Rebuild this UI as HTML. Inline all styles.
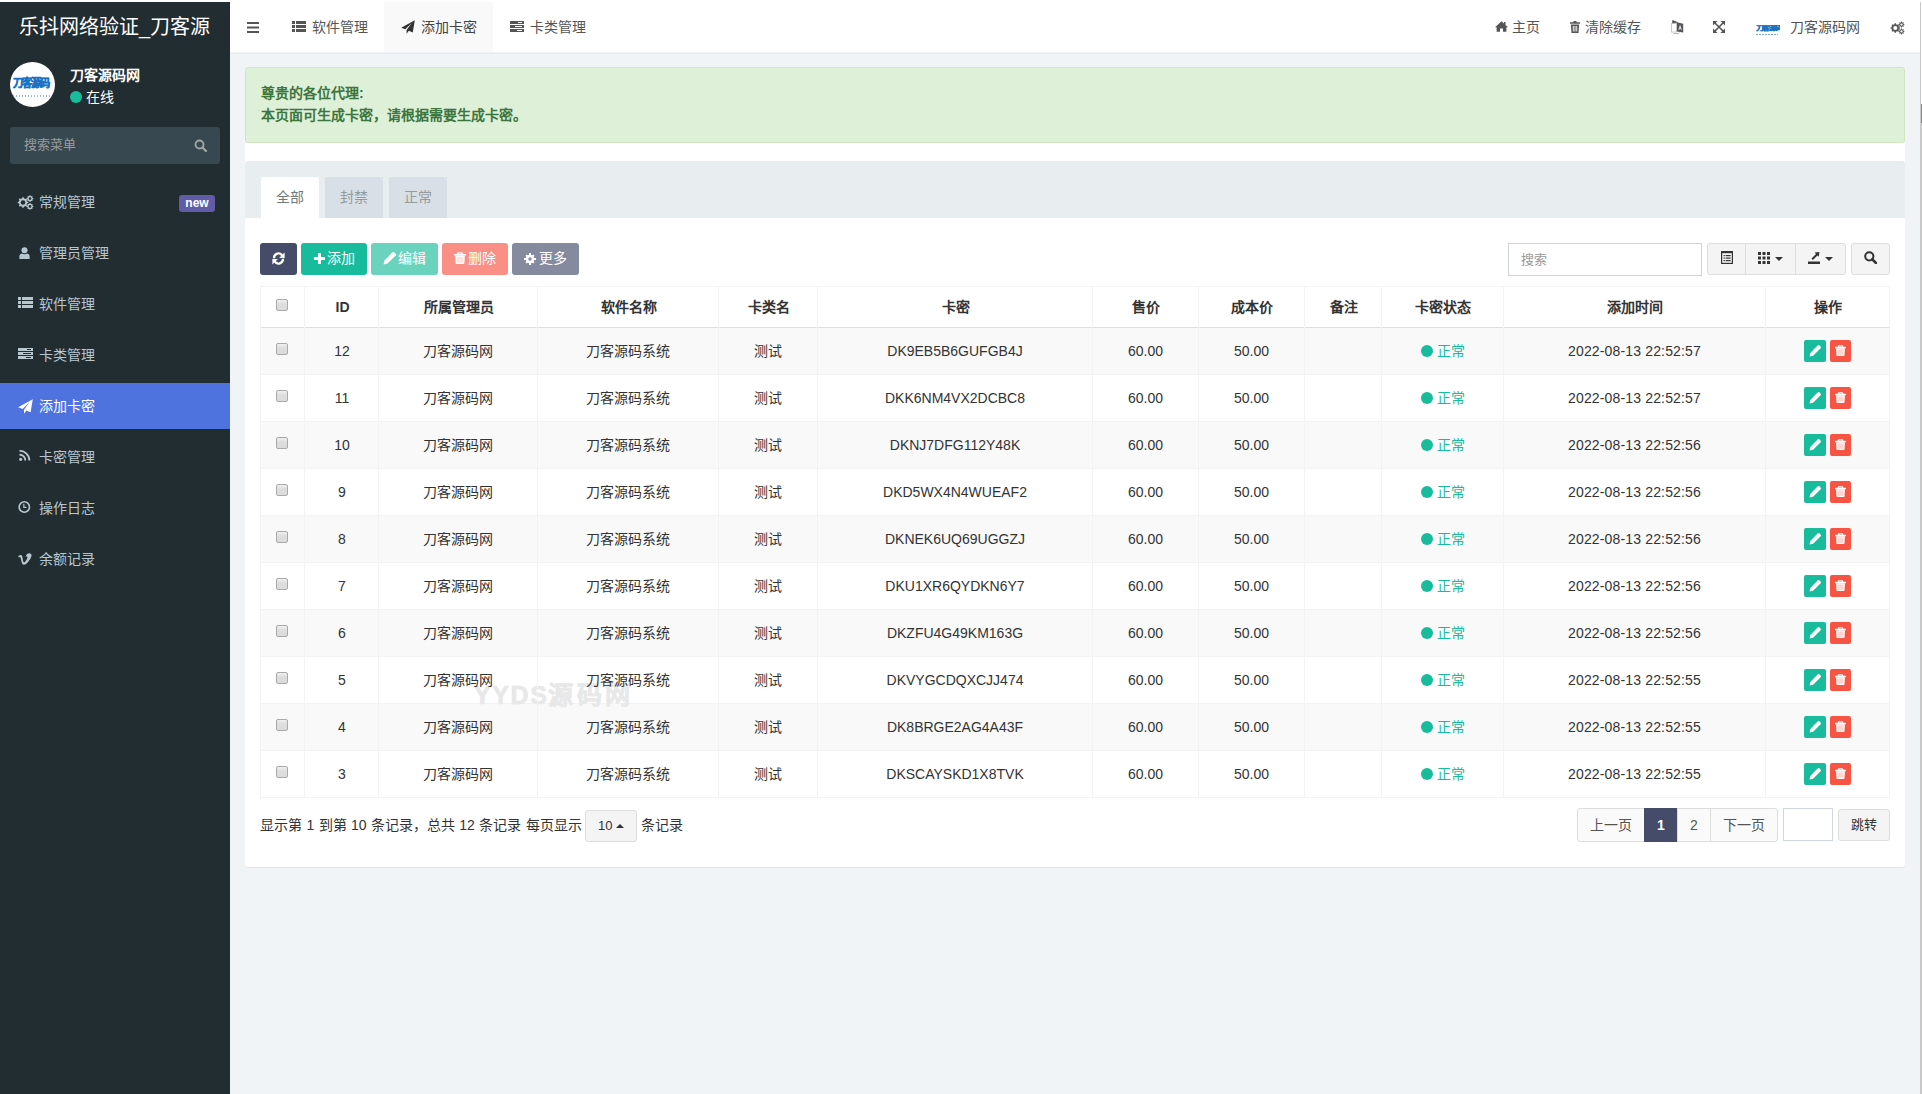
<!DOCTYPE html>
<html lang="zh-CN"><head><meta charset="utf-8">
<style>
*{box-sizing:border-box}
html,body{margin:0;padding:0}
body{width:1922px;height:1094px;position:relative;overflow:hidden;background:#fff;font-family:"Liberation Sans",sans-serif;font-size:14px;color:#333}
.abs{position:absolute}
svg{display:block}
#sb{position:absolute;left:0;top:2px;width:230px;height:1092px;background:#222d32}
#logo{position:absolute;left:0;top:0;width:230px;height:50px;color:#fff;font-size:20px;line-height:50px;padding-left:19px;white-space:nowrap}
.menu{position:absolute;left:0;width:230px;height:46px;color:#b8c7ce;font-size:14px;line-height:46px}
.menu .ic{position:absolute}
.menu .tx{position:absolute;left:39px;top:0}
.menu.active{background:#4e73df;color:#fff}
#hd{position:absolute;left:230px;top:2px;width:1690px;height:51px;background:#fff;border-bottom:1px solid #d9dee2}
.nav{position:absolute;top:0;height:50px;line-height:50px;color:#555;font-size:14px;white-space:nowrap}
#content{position:absolute;left:230px;top:52px;width:1690px;height:1042px;background:#f1f4f6}

.btn{position:absolute;top:243px;height:32px;border-radius:3px;color:#fff;font-size:14px;line-height:30px;white-space:nowrap}
.th{position:absolute;top:286px;height:42px;line-height:42px;text-align:center;font-weight:bold;color:#333;font-size:14px}
.cell{position:absolute;height:47px;line-height:47px;text-align:center;color:#333;font-size:14px;white-space:nowrap}
.dt{letter-spacing:0.15px}
.vl{position:absolute;top:286px;width:1px;height:512px;background:#f3f3f3}
.pg{position:absolute;top:808px;height:34px;line-height:32px;text-align:center;border:1px solid #ddd;background:#fafafa;color:#555;font-size:14px}
</style></head>
<body>
<div id="sb">
  <div id="logo">乐抖网络验证_刀客源</div>
  <div class="abs" style="left:10px;top:60px;width:45px;height:45px;border-radius:50%;background:#fff;overflow:hidden">
    <div class="abs" style="left:3px;top:15px;width:41px;font:bold 11px/12px 'Liberation Sans',sans-serif;color:#1b72c2;-webkit-text-stroke:0.5px #1b72c2;letter-spacing:-1.2px;white-space:nowrap;transform:scaleX(0.93);transform-origin:left top">刀客源码</div>
    <div class="abs" style="left:3px;top:33px;width:39px;height:2px;background:repeating-linear-gradient(90deg,rgba(60,130,205,0.55) 0 1.5px,transparent 1.5px 3px)"></div>
  </div>
  <div class="abs" style="left:70px;top:63px;color:#fff;font-weight:bold;font-size:14px;line-height:20px;white-space:nowrap">刀客源码网</div>
  <div class="abs" style="left:70px;top:89px;width:12px;height:12px;border-radius:50%;background:#18bc9c"></div>
  <div class="abs" style="left:86px;top:85px;color:#fff;font-size:14px;line-height:20px;white-space:nowrap">在线</div>
  <div class="abs" style="left:10px;top:125px;width:210px;height:37px;border-radius:3px;background:#374850"></div>
  <div class="abs" style="left:24px;top:133px;color:#9a9c9c;font-size:13px;line-height:20px;white-space:nowrap">搜索菜单</div>
  <svg class="abs" style="left:194px;top:137px" width="13" height="13" viewBox="0 0 13 13"><circle cx="5.5" cy="5.5" r="4" fill="none" stroke="#a3a6a6" stroke-width="1.8"/><path d="M8.5 8.5L12 12" stroke="#a3a6a6" stroke-width="2.2" stroke-linecap="round"/></svg>
  <div class="menu" style="top:177px"><svg class="ic" style="left:17px;top:16px" width="17" height="15" viewBox="0 0 17 15"><g fill="#b8c7ce"><circle cx="6" cy="7.5" r="4.2"/><circle cx="13" cy="3.6" r="2.6"/><circle cx="13" cy="11.4" r="2.6"/></g><g fill="none" stroke="#b8c7ce" stroke-width="1.6"><path d="M6 2.2v10.6M0.7 7.5h10.6M2.3 3.8l7.4 7.4M9.7 3.8l-7.4 7.4"/><path d="M13 0.3v6.6M9.7 3.6h6.6M10.7 1.3l4.6 4.6M15.3 1.3l-4.6 4.6M13 8.1v6.6M9.7 11.4h6.6M10.7 9.1l4.6 4.6M15.3 9.1l-4.6 4.6" stroke-width="1.1"/></g><g fill="#222d32"><circle cx="6" cy="7.5" r="2.3"/><circle cx="13" cy="3.6" r="1.3"/><circle cx="13" cy="11.4" r="1.3"/></g></svg><span class="tx">常规管理</span><div class="abs" style="left:179px;top:16px;width:36px;height:17px;border-radius:3px;background:#605ca8;color:#fff;font-weight:bold;font-size:12px;line-height:17px;text-align:center">new</div></div>
<div class="menu" style="top:228px"><svg class="ic" style="left:19px;top:17px" width="11" height="12" viewBox="0 0 12 13"><circle cx="6" cy="3.4" r="3.3" fill="#b8c7ce"/><path d="M0.4 13V10.2Q0.4 7.4 3.2 7.1Q4.5 7.9 6 7.9Q7.5 7.9 8.8 7.1Q11.6 7.4 11.6 10.2V13Z" fill="#b8c7ce"/></svg><span class="tx">管理员管理</span></div>
<div class="menu" style="top:279px"><svg class="ic" style="left:18px;top:16px" width="15" height="12" viewBox="0 0 15 12"><g fill="#b8c7ce"><rect x="0" y="0" width="3" height="3"/><rect x="4" y="0" width="11" height="3"/><rect x="0" y="4" width="3" height="3"/><rect x="4" y="4" width="11" height="3"/><rect x="0" y="8" width="3" height="3"/><rect x="4" y="8" width="11" height="3"/></g></svg><span class="tx">软件管理</span></div>
<div class="menu" style="top:330px"><svg class="ic" style="left:18px;top:16px" width="15" height="12" viewBox="0 0 15 12"><g fill="#b8c7ce"><rect x="0" y="0" width="15" height="3"/><rect x="0" y="4" width="15" height="3"/><rect x="0" y="8" width="15" height="3"/></g><g fill="#222d32"><rect x="9" y="1" width="4" height="1"/><rect x="5" y="5" width="8" height="1"/><rect x="8" y="9" width="5" height="1"/></g></svg><span class="tx">卡类管理</span></div>
<div class="menu active" style="top:381px"><svg class="ic" style="left:18px;top:16px" width="15" height="15" viewBox="0 0 15 15"><path d="M14.8 0.2L0.2 8.3L4.6 10L11.5 3.2L6 10.8L6 14.8L8.4 11.6L12.6 13.3Z" fill="#fff"/></svg><span class="tx">添加卡密</span></div>
<div class="menu" style="top:432px"><svg class="ic" style="left:19px;top:16px" width="12" height="11" viewBox="0 0 13 12"><circle cx="1.8" cy="10.2" r="1.7" fill="#b8c7ce"/><path d="M0.5 5.2A6 6 0 0 1 6.8 11.5" fill="none" stroke="#b8c7ce" stroke-width="2"/><path d="M0.5 1A10.5 10.5 0 0 1 11.3 11.5" fill="none" stroke="#b8c7ce" stroke-width="2"/></svg><span class="tx">卡密管理</span></div>
<div class="menu" style="top:483px"><svg class="ic" style="left:18px;top:16px" width="13" height="12" viewBox="0 0 14 13"><circle cx="6.8" cy="6.5" r="5.6" fill="none" stroke="#b8c7ce" stroke-width="1.7"/><path d="M6.3 3v4h2.8" fill="none" stroke="#b8c7ce" stroke-width="1.3"/></svg><span class="tx">操作日志</span></div>
<div class="menu" style="top:534px"><svg class="ic" style="left:18px;top:17px" width="14" height="12" viewBox="0 0 14 12"><path d="M0.3 3.2C1.3 2.4 2.2 1.9 3 2C4.2 2.1 4.4 4 4.8 6.2C5.2 8.3 5.6 9.4 6.1 9.4C7.4 9.3 9.4 5.6 9.4 4.5C9.4 3.3 8.4 3.5 7.6 3.9C8.3 1.2 10.2 0.1 12 0.4C14.2 0.8 13.8 3.5 12.2 6C10.4 8.8 8.1 11.7 6.1 11.8C4.3 11.9 3.8 9.8 3.3 7.7C2.9 5.8 2.6 3.8 1.9 3.9C1.6 3.9 1.1 4.2 0.8 4.5Z" fill="#b8c7ce"/></svg><span class="tx">余额记录</span></div>

</div>
<div id="hd">
  <svg class="abs" style="left:17px;top:20px" width="12" height="11" viewBox="0 0 12 11"><g fill="#555"><rect x="0" y="0" width="12" height="2"/><rect x="0" y="4.5" width="12" height="2"/><rect x="0" y="9" width="12" height="2"/></g></svg>
  <svg class="abs" style="left:62px;top:19px" width="14" height="11" viewBox="0 0 14 11"><g fill="#555"><rect x="0" y="0" width="3" height="3"/><rect x="4" y="0" width="10" height="3"/><rect x="0" y="4" width="3" height="3"/><rect x="4" y="4" width="10" height="3"/><rect x="0" y="8" width="3" height="3"/><rect x="4" y="8" width="10" height="3"/></g></svg>
  <div class="nav" style="left:82px">软件管理</div>
  <div class="abs" style="left:154px;top:0;width:109px;height:50px;background:#f9f9f9"></div>
  <svg class="abs" style="left:171px;top:18px" width="14" height="14" viewBox="0 0 15 15"><path d="M14.8 0.2L0.2 8.3L4.6 10L11.5 3.2L6 10.8L6 14.8L8.4 11.6L12.6 13.3Z" fill="#333"/></svg>
  <div class="nav" style="left:191px;color:#444">添加卡密</div>
  <svg class="abs" style="left:280px;top:19px" width="14" height="11" viewBox="0 0 14 11"><g fill="#555"><rect x="0" y="0" width="14" height="3"/><rect x="0" y="4" width="14" height="3"/><rect x="0" y="8" width="14" height="3"/></g><g fill="#fff"><rect x="8" y="1" width="4" height="1"/><rect x="5" y="5" width="7" height="1"/><rect x="7" y="9" width="5" height="1"/></g></svg>
  <div class="nav" style="left:300px">卡类管理</div>

  <svg class="abs" style="left:1265px;top:19px" width="13" height="11" viewBox="0 0 13 11"><path d="M6.5 0.3L0 6.2L1.6 6.2L1.6 10.8L5 10.8L5 7.5L8 7.5L8 10.8L11.4 10.8L11.4 6.2L13 6.2L10.5 3.9L10.5 1L9 1L9 2.5Z" fill="#555"/></svg>
  <div class="nav" style="left:1282px">主页</div>
  <svg class="abs" style="left:1340px;top:19px" width="10" height="12" viewBox="0 0 10 12"><path d="M3.5 0h3v1.2H10v1.6H0V1.2h3.5Z M0.8 3.5h8.4L8.5 12H1.5Z" fill="#555"/><g fill="#fff"><rect x="2.8" y="5" width="0.9" height="5.5"/><rect x="4.55" y="5" width="0.9" height="5.5"/><rect x="6.3" y="5" width="0.9" height="5.5"/></g></svg>
  <div class="nav" style="left:1355px">清除缓存</div>
  <svg class="abs" style="left:1440px;top:17px" width="14" height="16" viewBox="0 0 14 16"><rect x="1.5" y="4.5" width="5.5" height="8.5" fill="#fff" stroke="#c8c8d0" stroke-width="1"/><path d="M2.2 1.2L3.4 1.2L8.5 3.4L2.2 4.2Z" fill="#555"/><path d="M6.8 3.3L13.2 4.8V13.5L6.8 12.5Z" fill="#555"/><path d="M8.4 11L9.8 6.2H10.4L11.8 11H10.9L10.6 9.8H9.6L9.3 11Z" fill="#dfe6f0"/><path d="M3.5 14.6H8.5L9.6 13.4" fill="none" stroke="#aaa" stroke-width="0.9"/></svg>
  <svg class="abs" style="left:1483px;top:19px" width="12" height="12" viewBox="0 0 12 12"><g fill="#555"><path d="M0 0h4.6L0 4.6Z"/><path d="M12 0h-4.6L12 4.6Z"/><path d="M0 12h4.6L0 7.4Z"/><path d="M12 12h-4.6L12 7.4Z"/></g><path d="M1.5 1.5L10.5 10.5M10.5 1.5L1.5 10.5" stroke="#555" stroke-width="1.6"/></svg>
  <div class="abs" style="left:1514px;top:14px;width:25px;height:25px;border-radius:50%;background:#fff"></div>
  <div class="abs" style="left:1526px;top:23px;width:24px;height:8px;overflow:hidden"><div style="font:bold 8px/8px 'Liberation Sans',sans-serif;color:#1b72c2;-webkit-text-stroke:0.4px #1b72c2;letter-spacing:-1.6px;white-space:nowrap;transform:scaleY(0.75);transform-origin:left top">刀客源码</div></div><div class="abs" style="left:1526px;top:32px;width:22px;height:1px;background:repeating-linear-gradient(90deg,#7faad8 0 2px,transparent 2px 3px)"></div>
  <div class="nav" style="left:1560px">刀客源码网</div>
  <svg class="abs" style="left:1660px;top:19px" width="15" height="14" viewBox="0 0 17 15"><g fill="#555"><circle cx="6" cy="7.5" r="4.2"/><circle cx="13" cy="3.6" r="2.6"/><circle cx="13" cy="11.4" r="2.6"/></g><g fill="none" stroke="#555" stroke-width="1.6"><path d="M6 2.2v10.6M0.7 7.5h10.6M2.3 3.8l7.4 7.4M9.7 3.8l-7.4 7.4"/><path d="M13 0.3v6.6M9.7 3.6h6.6M10.7 1.3l4.6 4.6M15.3 1.3l-4.6 4.6M13 8.1v6.6M9.7 11.4h6.6M10.7 9.1l4.6 4.6M15.3 9.1l-4.6 4.6" stroke-width="1.1"/></g><g fill="#fff"><circle cx="6" cy="7.5" r="2.3"/><circle cx="13" cy="3.6" r="1.3"/><circle cx="13" cy="11.4" r="1.3"/></g></svg>
</div>
<div id="content"></div>
<div class="abs" style="left:230px;top:53px;width:1690px;height:1px;background:#e6eaed"></div>
<!-- alert -->
<div class="abs" style="left:245px;top:67px;width:1660px;height:76px;background:#dff0d8;border:1px solid #d0e6c2;border-radius:3px"></div>
<div class="abs" style="left:261px;top:83px;color:#3c763d;font-weight:bold;font-size:14px;line-height:21.5px;white-space:nowrap">尊贵的各位代理:<br>本页面可生成卡密，请根据需要生成卡密。</div>
<!-- panel -->
<div class="abs" style="left:245px;top:143px;width:1660px;height:724px;background:#fff;border-radius:0 0 3px 3px;box-shadow:0 1px 1px rgba(0,0,0,0.06)"></div>
<div class="abs" style="left:245px;top:161px;width:1660px;height:57px;background:#e8edf0;border-radius:3px 3px 0 0"></div>
<div class="abs" style="left:261px;top:177px;width:58px;height:41px;background:#fff;border-radius:2px 2px 0 0;color:#6e7b7c;text-align:center;line-height:40px">全部</div>
<div class="abs" style="left:325px;top:177px;width:58px;height:41px;background:#d9dfe6;border-radius:2px 2px 0 0;color:#939b9c;text-align:center;line-height:40px">封禁</div>
<div class="abs" style="left:389px;top:177px;width:58px;height:41px;background:#d9dfe6;border-radius:2px 2px 0 0;color:#939b9c;text-align:center;line-height:40px">正常</div>
<!-- toolbar -->
<div class="btn" style="left:260px;width:37px;background:#444c69"><svg class="abs" style="left:12px;top:9px" width="13" height="13" viewBox="0 0 13 13"><g fill="none" stroke="#fff" stroke-width="2.3"><path d="M2 6.2A4.5 4.5 0 0 1 10.3 3.6"/><path d="M11 6.8A4.5 4.5 0 0 1 2.7 9.4"/></g><path d="M12.6 0.4V5.9H7.1Z" fill="#fff"/><path d="M0.4 12.6V7.1H5.9Z" fill="#fff"/></svg></div>
<div class="btn" style="left:301px;width:66px;background:#18bc9c"><svg class="abs" style="left:13px;top:10px" width="11" height="11" viewBox="0 0 11 11"><path d="M4 0h3v4h4v3H7v4H4V7H0V4h4Z" fill="#fff"/></svg><span class="abs" style="left:26px">添加</span></div>
<div class="btn" style="left:371px;width:67px;background:#6ad3be"><svg class="abs" style="left:12px;top:9px" width="13" height="13" viewBox="0 0 12 12"><path d="M0.5 11.5L1.3 7.9L9.1 0.1Q9.6 -0.3 10.1 0.1L11.9 1.9Q12.3 2.4 11.9 2.9L4.1 10.7Z" fill="#fff"/></svg><span class="abs" style="left:27px">编辑</span></div>
<div class="btn" style="left:442px;width:66px;background:#fa9085"><svg class="abs" style="left:12px;top:9px" width="12" height="12" viewBox="0 0 12 12"><path d="M3.6 0.2H8.4L9.2 1.9H11.4Q12 1.9 12 2.5V3.6H0V2.5Q0 1.9 0.6 1.9H2.8Z" fill="#fff"/><path d="M1.2 3.6H10.8L10.4 11.2Q10.3 12 9.5 12H2.5Q1.7 12 1.6 11.2Z" fill="#fff"/><rect x="2.9" y="4.9" width="6.2" height="5.8" fill="#fa9085" opacity="0.25"/><rect x="4.3" y="0.9" width="3.4" height="1" fill="#fa9085" opacity="0.5"/></svg><span class="abs" style="left:26px">删除</span></div>
<div class="btn" style="left:512px;width:67px;background:#858a9f"><svg class="abs" style="left:12px;top:10px" width="12" height="12" viewBox="0 0 12 12"><g fill="#fff"><circle cx="6" cy="6" r="4.2"/><path d="M5 0h2v12H5Z M0 5h12v2H0Z M1.4 2.8l1.4-1.4l7.8 7.8l-1.4 1.4Z M9.2 1.4l1.4 1.4l-7.8 7.8l-1.4-1.4Z"/></g><circle cx="6" cy="6" r="1.7" fill="#858a9f"/></svg><span class="abs" style="left:27px">更多</span></div>
<!-- search & tools -->
<div class="abs" style="left:1508px;top:243px;width:194px;height:33px;border:1px solid #ccd2da;background:#fff;border-radius:0"></div>
<div class="abs" style="left:1521px;top:250px;color:#999;font-size:13px;line-height:20px">搜索</div>
<div class="abs" style="left:1707px;top:243px;width:139px;height:32px;border:1px solid #ddd;background:#f4f4f4;border-radius:3px"></div>
<div class="abs" style="left:1745px;top:243px;width:1px;height:32px;background:#ddd"></div>
<div class="abs" style="left:1795px;top:243px;width:1px;height:32px;background:#ddd"></div>
<svg class="abs" style="left:1721px;top:251px" width="12" height="13" viewBox="0 0 12 13"><rect x="0.6" y="0.6" width="10.8" height="11.8" fill="none" stroke="#333" stroke-width="1.2"/><rect x="0" y="0" width="12" height="2.2" fill="#333"/><g fill="#333"><rect x="2.5" y="4" width="1.3" height="1.2"/><rect x="4.6" y="4" width="5" height="1.2"/><rect x="2.5" y="6.5" width="1.3" height="1.2"/><rect x="4.6" y="6.5" width="5" height="1.2"/><rect x="2.5" y="9" width="1.3" height="1.2"/><rect x="4.6" y="9" width="5" height="1.2"/></g></svg>
<svg class="abs" style="left:1758px;top:252px" width="12" height="12" viewBox="0 0 12 12"><g fill="#333"><rect x="0" y="0" width="3" height="3"/><rect x="4.5" y="0" width="3" height="3"/><rect x="9" y="0" width="3" height="3"/><rect x="0" y="4.5" width="3" height="3"/><rect x="4.5" y="4.5" width="3" height="3"/><rect x="9" y="4.5" width="3" height="3"/><rect x="0" y="9" width="3" height="3"/><rect x="4.5" y="9" width="3" height="3"/><rect x="9" y="9" width="3" height="3"/></g></svg>
<svg class="abs" style="left:1775px;top:257px" width="8" height="4" viewBox="0 0 8 4"><path d="M0 0h8L4 4Z" fill="#333"/></svg>
<svg class="abs" style="left:1808px;top:251px" width="13" height="13" viewBox="0 0 13 13"><rect x="0" y="10.5" width="12" height="2.5" fill="#333"/><path d="M3.5 7.5L8 3L6.6 1.6L11.4 1L10.8 5.8L9.4 4.4L4.9 8.9Z" fill="#333"/></svg>
<svg class="abs" style="left:1825px;top:257px" width="8" height="4" viewBox="0 0 8 4"><path d="M0 0h8L4 4Z" fill="#333"/></svg>
<div class="abs" style="left:1851px;top:243px;width:39px;height:32px;border:1px solid #ddd;background:#f4f4f4;border-radius:3px"></div>
<svg class="abs" style="left:1864px;top:251px" width="13" height="13" viewBox="0 0 13 13"><circle cx="5.3" cy="5.3" r="4.1" fill="none" stroke="#333" stroke-width="2"/><path d="M8.3 8.3L12 12" stroke="#333" stroke-width="2.6" stroke-linecap="round"/></svg>
<div class="abs" style="left:260px;top:286px;width:1630px;height:512px;border:1px solid #f3f3f3"></div>
<div class="abs" style="left:261px;top:328px;width:1628px;height:47px;background:#f9f9f9"></div>
<div class="abs" style="left:261px;top:374px;width:1628px;height:1px;background:#f3f3f3"></div>
<div class="abs" style="left:261px;top:421px;width:1628px;height:1px;background:#f3f3f3"></div>
<div class="abs" style="left:261px;top:422px;width:1628px;height:47px;background:#f9f9f9"></div>
<div class="abs" style="left:261px;top:468px;width:1628px;height:1px;background:#f3f3f3"></div>
<div class="abs" style="left:261px;top:515px;width:1628px;height:1px;background:#f3f3f3"></div>
<div class="abs" style="left:261px;top:516px;width:1628px;height:47px;background:#f9f9f9"></div>
<div class="abs" style="left:261px;top:562px;width:1628px;height:1px;background:#f3f3f3"></div>
<div class="abs" style="left:261px;top:609px;width:1628px;height:1px;background:#f3f3f3"></div>
<div class="abs" style="left:261px;top:610px;width:1628px;height:47px;background:#f9f9f9"></div>
<div class="abs" style="left:261px;top:656px;width:1628px;height:1px;background:#f3f3f3"></div>
<div class="abs" style="left:261px;top:703px;width:1628px;height:1px;background:#f3f3f3"></div>
<div class="abs" style="left:261px;top:704px;width:1628px;height:47px;background:#f9f9f9"></div>
<div class="abs" style="left:261px;top:750px;width:1628px;height:1px;background:#f3f3f3"></div>
<div class="abs" style="left:261px;top:327px;width:1628px;height:1px;background:#dddddd"></div>
<div class="abs" style="left:474px;top:680px;color:#e8e8e8;-webkit-text-stroke:0.6px #e8e8e8;font-weight:bold;font-size:25px;line-height:30px;letter-spacing:1.6px;white-space:nowrap">YYDS<span style="letter-spacing:3.5px">源码网</span></div>
<div class="vl" style="left:304px"></div>
<div class="vl" style="left:378px"></div>
<div class="vl" style="left:537px"></div>
<div class="vl" style="left:718px"></div>
<div class="vl" style="left:817px"></div>
<div class="vl" style="left:1092px"></div>
<div class="vl" style="left:1198px"></div>
<div class="vl" style="left:1304px"></div>
<div class="vl" style="left:1381px"></div>
<div class="vl" style="left:1503px"></div>
<div class="vl" style="left:1765px"></div>
<div class="abs" style="left:276px;top:299px;width:12px;height:12px;border:1px solid #a9a9a9;border-radius:2px;background:linear-gradient(#f0f0f0,#dddddd 40%,#dcdcdc)"></div>
<div class="th" style="left:306px;width:73px">ID</div>
<div class="th" style="left:379px;width:159px">所属管理员</div>
<div class="th" style="left:538px;width:181px">软件名称</div>
<div class="th" style="left:719px;width:99px">卡类名</div>
<div class="th" style="left:818px;width:275px">卡密</div>
<div class="th" style="left:1093px;width:106px">售价</div>
<div class="th" style="left:1199px;width:106px">成本价</div>
<div class="th" style="left:1305px;width:77px">备注</div>
<div class="th" style="left:1382px;width:122px">卡密状态</div>
<div class="th" style="left:1504px;width:262px">添加时间</div>
<div class="th" style="left:1766px;width:124px">操作</div>
<div class="abs" style="left:276px;top:343px;width:12px;height:12px;border:1px solid #a9a9a9;border-radius:2px;background:linear-gradient(#f0f0f0,#dddddd 40%,#dcdcdc)"></div>
<div class="cell" style="left:306px;top:328px;width:72px">12</div>
<div class="cell" style="left:379px;top:328px;width:158px">刀客源码网</div>
<div class="cell" style="left:538px;top:328px;width:180px">刀客源码系统</div>
<div class="cell" style="left:719px;top:328px;width:98px">测试</div>
<div class="cell" style="left:818px;top:328px;width:274px">DK9EB5B6GUFGB4J</div>
<div class="cell" style="left:1093px;top:328px;width:105px">60.00</div>
<div class="cell" style="left:1199px;top:328px;width:105px">50.00</div>
<div class="abs" style="left:1421px;top:345px;width:12px;height:12px;border-radius:50%;background:#18bc9c"></div>
<div class="abs" style="left:1437px;top:328px;height:47px;line-height:47px;color:#18bc9c;white-space:nowrap">正常</div>
<div class="cell dt" style="left:1504px;top:328px;width:261px">2022-08-13 22:52:57</div>
<div class="abs" style="left:1804px;top:340px;width:22px;height:22px;border-radius:2px;background:#18bc9c"><svg class="abs" style="left:5px;top:5px" width="12" height="12" viewBox="0 0 12 12"><path d="M0.5 11.5L1.3 7.9L9.1 0.1Q9.6 -0.3 10.1 0.1L11.9 1.9Q12.3 2.4 11.9 2.9L4.1 10.7Z" fill="#fff"/></svg></div>
<div class="abs" style="left:1830px;top:340px;width:21px;height:22px;border-radius:2px;background:#f75444"><svg class="abs" style="left:5px;top:5px" width="11" height="11" viewBox="0 0 12 12"><path d="M3.6 0.2H8.4L9.2 1.9H11.4Q12 1.9 12 2.5V3.6H0V2.5Q0 1.9 0.6 1.9H2.8Z" fill="#fff"/><path d="M1.2 3.6H10.8L10.4 11.2Q10.3 12 9.5 12H2.5Q1.7 12 1.6 11.2Z" fill="#fff"/><rect x="2.9" y="4.9" width="6.2" height="5.8" fill="#f75444" opacity="0.25"/><rect x="4.3" y="0.9" width="3.4" height="1" fill="#f75444" opacity="0.5"/></svg></div>
<div class="abs" style="left:276px;top:390px;width:12px;height:12px;border:1px solid #a9a9a9;border-radius:2px;background:linear-gradient(#f0f0f0,#dddddd 40%,#dcdcdc)"></div>
<div class="cell" style="left:306px;top:375px;width:72px">11</div>
<div class="cell" style="left:379px;top:375px;width:158px">刀客源码网</div>
<div class="cell" style="left:538px;top:375px;width:180px">刀客源码系统</div>
<div class="cell" style="left:719px;top:375px;width:98px">测试</div>
<div class="cell" style="left:818px;top:375px;width:274px">DKK6NM4VX2DCBC8</div>
<div class="cell" style="left:1093px;top:375px;width:105px">60.00</div>
<div class="cell" style="left:1199px;top:375px;width:105px">50.00</div>
<div class="abs" style="left:1421px;top:392px;width:12px;height:12px;border-radius:50%;background:#18bc9c"></div>
<div class="abs" style="left:1437px;top:375px;height:47px;line-height:47px;color:#18bc9c;white-space:nowrap">正常</div>
<div class="cell dt" style="left:1504px;top:375px;width:261px">2022-08-13 22:52:57</div>
<div class="abs" style="left:1804px;top:387px;width:22px;height:22px;border-radius:2px;background:#18bc9c"><svg class="abs" style="left:5px;top:5px" width="12" height="12" viewBox="0 0 12 12"><path d="M0.5 11.5L1.3 7.9L9.1 0.1Q9.6 -0.3 10.1 0.1L11.9 1.9Q12.3 2.4 11.9 2.9L4.1 10.7Z" fill="#fff"/></svg></div>
<div class="abs" style="left:1830px;top:387px;width:21px;height:22px;border-radius:2px;background:#f75444"><svg class="abs" style="left:5px;top:5px" width="11" height="11" viewBox="0 0 12 12"><path d="M3.6 0.2H8.4L9.2 1.9H11.4Q12 1.9 12 2.5V3.6H0V2.5Q0 1.9 0.6 1.9H2.8Z" fill="#fff"/><path d="M1.2 3.6H10.8L10.4 11.2Q10.3 12 9.5 12H2.5Q1.7 12 1.6 11.2Z" fill="#fff"/><rect x="2.9" y="4.9" width="6.2" height="5.8" fill="#f75444" opacity="0.25"/><rect x="4.3" y="0.9" width="3.4" height="1" fill="#f75444" opacity="0.5"/></svg></div>
<div class="abs" style="left:276px;top:437px;width:12px;height:12px;border:1px solid #a9a9a9;border-radius:2px;background:linear-gradient(#f0f0f0,#dddddd 40%,#dcdcdc)"></div>
<div class="cell" style="left:306px;top:422px;width:72px">10</div>
<div class="cell" style="left:379px;top:422px;width:158px">刀客源码网</div>
<div class="cell" style="left:538px;top:422px;width:180px">刀客源码系统</div>
<div class="cell" style="left:719px;top:422px;width:98px">测试</div>
<div class="cell" style="left:818px;top:422px;width:274px">DKNJ7DFG112Y48K</div>
<div class="cell" style="left:1093px;top:422px;width:105px">60.00</div>
<div class="cell" style="left:1199px;top:422px;width:105px">50.00</div>
<div class="abs" style="left:1421px;top:439px;width:12px;height:12px;border-radius:50%;background:#18bc9c"></div>
<div class="abs" style="left:1437px;top:422px;height:47px;line-height:47px;color:#18bc9c;white-space:nowrap">正常</div>
<div class="cell dt" style="left:1504px;top:422px;width:261px">2022-08-13 22:52:56</div>
<div class="abs" style="left:1804px;top:434px;width:22px;height:22px;border-radius:2px;background:#18bc9c"><svg class="abs" style="left:5px;top:5px" width="12" height="12" viewBox="0 0 12 12"><path d="M0.5 11.5L1.3 7.9L9.1 0.1Q9.6 -0.3 10.1 0.1L11.9 1.9Q12.3 2.4 11.9 2.9L4.1 10.7Z" fill="#fff"/></svg></div>
<div class="abs" style="left:1830px;top:434px;width:21px;height:22px;border-radius:2px;background:#f75444"><svg class="abs" style="left:5px;top:5px" width="11" height="11" viewBox="0 0 12 12"><path d="M3.6 0.2H8.4L9.2 1.9H11.4Q12 1.9 12 2.5V3.6H0V2.5Q0 1.9 0.6 1.9H2.8Z" fill="#fff"/><path d="M1.2 3.6H10.8L10.4 11.2Q10.3 12 9.5 12H2.5Q1.7 12 1.6 11.2Z" fill="#fff"/><rect x="2.9" y="4.9" width="6.2" height="5.8" fill="#f75444" opacity="0.25"/><rect x="4.3" y="0.9" width="3.4" height="1" fill="#f75444" opacity="0.5"/></svg></div>
<div class="abs" style="left:276px;top:484px;width:12px;height:12px;border:1px solid #a9a9a9;border-radius:2px;background:linear-gradient(#f0f0f0,#dddddd 40%,#dcdcdc)"></div>
<div class="cell" style="left:306px;top:469px;width:72px">9</div>
<div class="cell" style="left:379px;top:469px;width:158px">刀客源码网</div>
<div class="cell" style="left:538px;top:469px;width:180px">刀客源码系统</div>
<div class="cell" style="left:719px;top:469px;width:98px">测试</div>
<div class="cell" style="left:818px;top:469px;width:274px">DKD5WX4N4WUEAF2</div>
<div class="cell" style="left:1093px;top:469px;width:105px">60.00</div>
<div class="cell" style="left:1199px;top:469px;width:105px">50.00</div>
<div class="abs" style="left:1421px;top:486px;width:12px;height:12px;border-radius:50%;background:#18bc9c"></div>
<div class="abs" style="left:1437px;top:469px;height:47px;line-height:47px;color:#18bc9c;white-space:nowrap">正常</div>
<div class="cell dt" style="left:1504px;top:469px;width:261px">2022-08-13 22:52:56</div>
<div class="abs" style="left:1804px;top:481px;width:22px;height:22px;border-radius:2px;background:#18bc9c"><svg class="abs" style="left:5px;top:5px" width="12" height="12" viewBox="0 0 12 12"><path d="M0.5 11.5L1.3 7.9L9.1 0.1Q9.6 -0.3 10.1 0.1L11.9 1.9Q12.3 2.4 11.9 2.9L4.1 10.7Z" fill="#fff"/></svg></div>
<div class="abs" style="left:1830px;top:481px;width:21px;height:22px;border-radius:2px;background:#f75444"><svg class="abs" style="left:5px;top:5px" width="11" height="11" viewBox="0 0 12 12"><path d="M3.6 0.2H8.4L9.2 1.9H11.4Q12 1.9 12 2.5V3.6H0V2.5Q0 1.9 0.6 1.9H2.8Z" fill="#fff"/><path d="M1.2 3.6H10.8L10.4 11.2Q10.3 12 9.5 12H2.5Q1.7 12 1.6 11.2Z" fill="#fff"/><rect x="2.9" y="4.9" width="6.2" height="5.8" fill="#f75444" opacity="0.25"/><rect x="4.3" y="0.9" width="3.4" height="1" fill="#f75444" opacity="0.5"/></svg></div>
<div class="abs" style="left:276px;top:531px;width:12px;height:12px;border:1px solid #a9a9a9;border-radius:2px;background:linear-gradient(#f0f0f0,#dddddd 40%,#dcdcdc)"></div>
<div class="cell" style="left:306px;top:516px;width:72px">8</div>
<div class="cell" style="left:379px;top:516px;width:158px">刀客源码网</div>
<div class="cell" style="left:538px;top:516px;width:180px">刀客源码系统</div>
<div class="cell" style="left:719px;top:516px;width:98px">测试</div>
<div class="cell" style="left:818px;top:516px;width:274px">DKNEK6UQ69UGGZJ</div>
<div class="cell" style="left:1093px;top:516px;width:105px">60.00</div>
<div class="cell" style="left:1199px;top:516px;width:105px">50.00</div>
<div class="abs" style="left:1421px;top:533px;width:12px;height:12px;border-radius:50%;background:#18bc9c"></div>
<div class="abs" style="left:1437px;top:516px;height:47px;line-height:47px;color:#18bc9c;white-space:nowrap">正常</div>
<div class="cell dt" style="left:1504px;top:516px;width:261px">2022-08-13 22:52:56</div>
<div class="abs" style="left:1804px;top:528px;width:22px;height:22px;border-radius:2px;background:#18bc9c"><svg class="abs" style="left:5px;top:5px" width="12" height="12" viewBox="0 0 12 12"><path d="M0.5 11.5L1.3 7.9L9.1 0.1Q9.6 -0.3 10.1 0.1L11.9 1.9Q12.3 2.4 11.9 2.9L4.1 10.7Z" fill="#fff"/></svg></div>
<div class="abs" style="left:1830px;top:528px;width:21px;height:22px;border-radius:2px;background:#f75444"><svg class="abs" style="left:5px;top:5px" width="11" height="11" viewBox="0 0 12 12"><path d="M3.6 0.2H8.4L9.2 1.9H11.4Q12 1.9 12 2.5V3.6H0V2.5Q0 1.9 0.6 1.9H2.8Z" fill="#fff"/><path d="M1.2 3.6H10.8L10.4 11.2Q10.3 12 9.5 12H2.5Q1.7 12 1.6 11.2Z" fill="#fff"/><rect x="2.9" y="4.9" width="6.2" height="5.8" fill="#f75444" opacity="0.25"/><rect x="4.3" y="0.9" width="3.4" height="1" fill="#f75444" opacity="0.5"/></svg></div>
<div class="abs" style="left:276px;top:578px;width:12px;height:12px;border:1px solid #a9a9a9;border-radius:2px;background:linear-gradient(#f0f0f0,#dddddd 40%,#dcdcdc)"></div>
<div class="cell" style="left:306px;top:563px;width:72px">7</div>
<div class="cell" style="left:379px;top:563px;width:158px">刀客源码网</div>
<div class="cell" style="left:538px;top:563px;width:180px">刀客源码系统</div>
<div class="cell" style="left:719px;top:563px;width:98px">测试</div>
<div class="cell" style="left:818px;top:563px;width:274px">DKU1XR6QYDKN6Y7</div>
<div class="cell" style="left:1093px;top:563px;width:105px">60.00</div>
<div class="cell" style="left:1199px;top:563px;width:105px">50.00</div>
<div class="abs" style="left:1421px;top:580px;width:12px;height:12px;border-radius:50%;background:#18bc9c"></div>
<div class="abs" style="left:1437px;top:563px;height:47px;line-height:47px;color:#18bc9c;white-space:nowrap">正常</div>
<div class="cell dt" style="left:1504px;top:563px;width:261px">2022-08-13 22:52:56</div>
<div class="abs" style="left:1804px;top:575px;width:22px;height:22px;border-radius:2px;background:#18bc9c"><svg class="abs" style="left:5px;top:5px" width="12" height="12" viewBox="0 0 12 12"><path d="M0.5 11.5L1.3 7.9L9.1 0.1Q9.6 -0.3 10.1 0.1L11.9 1.9Q12.3 2.4 11.9 2.9L4.1 10.7Z" fill="#fff"/></svg></div>
<div class="abs" style="left:1830px;top:575px;width:21px;height:22px;border-radius:2px;background:#f75444"><svg class="abs" style="left:5px;top:5px" width="11" height="11" viewBox="0 0 12 12"><path d="M3.6 0.2H8.4L9.2 1.9H11.4Q12 1.9 12 2.5V3.6H0V2.5Q0 1.9 0.6 1.9H2.8Z" fill="#fff"/><path d="M1.2 3.6H10.8L10.4 11.2Q10.3 12 9.5 12H2.5Q1.7 12 1.6 11.2Z" fill="#fff"/><rect x="2.9" y="4.9" width="6.2" height="5.8" fill="#f75444" opacity="0.25"/><rect x="4.3" y="0.9" width="3.4" height="1" fill="#f75444" opacity="0.5"/></svg></div>
<div class="abs" style="left:276px;top:625px;width:12px;height:12px;border:1px solid #a9a9a9;border-radius:2px;background:linear-gradient(#f0f0f0,#dddddd 40%,#dcdcdc)"></div>
<div class="cell" style="left:306px;top:610px;width:72px">6</div>
<div class="cell" style="left:379px;top:610px;width:158px">刀客源码网</div>
<div class="cell" style="left:538px;top:610px;width:180px">刀客源码系统</div>
<div class="cell" style="left:719px;top:610px;width:98px">测试</div>
<div class="cell" style="left:818px;top:610px;width:274px">DKZFU4G49KM163G</div>
<div class="cell" style="left:1093px;top:610px;width:105px">60.00</div>
<div class="cell" style="left:1199px;top:610px;width:105px">50.00</div>
<div class="abs" style="left:1421px;top:627px;width:12px;height:12px;border-radius:50%;background:#18bc9c"></div>
<div class="abs" style="left:1437px;top:610px;height:47px;line-height:47px;color:#18bc9c;white-space:nowrap">正常</div>
<div class="cell dt" style="left:1504px;top:610px;width:261px">2022-08-13 22:52:56</div>
<div class="abs" style="left:1804px;top:622px;width:22px;height:22px;border-radius:2px;background:#18bc9c"><svg class="abs" style="left:5px;top:5px" width="12" height="12" viewBox="0 0 12 12"><path d="M0.5 11.5L1.3 7.9L9.1 0.1Q9.6 -0.3 10.1 0.1L11.9 1.9Q12.3 2.4 11.9 2.9L4.1 10.7Z" fill="#fff"/></svg></div>
<div class="abs" style="left:1830px;top:622px;width:21px;height:22px;border-radius:2px;background:#f75444"><svg class="abs" style="left:5px;top:5px" width="11" height="11" viewBox="0 0 12 12"><path d="M3.6 0.2H8.4L9.2 1.9H11.4Q12 1.9 12 2.5V3.6H0V2.5Q0 1.9 0.6 1.9H2.8Z" fill="#fff"/><path d="M1.2 3.6H10.8L10.4 11.2Q10.3 12 9.5 12H2.5Q1.7 12 1.6 11.2Z" fill="#fff"/><rect x="2.9" y="4.9" width="6.2" height="5.8" fill="#f75444" opacity="0.25"/><rect x="4.3" y="0.9" width="3.4" height="1" fill="#f75444" opacity="0.5"/></svg></div>
<div class="abs" style="left:276px;top:672px;width:12px;height:12px;border:1px solid #a9a9a9;border-radius:2px;background:linear-gradient(#f0f0f0,#dddddd 40%,#dcdcdc)"></div>
<div class="cell" style="left:306px;top:657px;width:72px">5</div>
<div class="cell" style="left:379px;top:657px;width:158px">刀客源码网</div>
<div class="cell" style="left:538px;top:657px;width:180px">刀客源码系统</div>
<div class="cell" style="left:719px;top:657px;width:98px">测试</div>
<div class="cell" style="left:818px;top:657px;width:274px">DKVYGCDQXCJJ474</div>
<div class="cell" style="left:1093px;top:657px;width:105px">60.00</div>
<div class="cell" style="left:1199px;top:657px;width:105px">50.00</div>
<div class="abs" style="left:1421px;top:674px;width:12px;height:12px;border-radius:50%;background:#18bc9c"></div>
<div class="abs" style="left:1437px;top:657px;height:47px;line-height:47px;color:#18bc9c;white-space:nowrap">正常</div>
<div class="cell dt" style="left:1504px;top:657px;width:261px">2022-08-13 22:52:55</div>
<div class="abs" style="left:1804px;top:669px;width:22px;height:22px;border-radius:2px;background:#18bc9c"><svg class="abs" style="left:5px;top:5px" width="12" height="12" viewBox="0 0 12 12"><path d="M0.5 11.5L1.3 7.9L9.1 0.1Q9.6 -0.3 10.1 0.1L11.9 1.9Q12.3 2.4 11.9 2.9L4.1 10.7Z" fill="#fff"/></svg></div>
<div class="abs" style="left:1830px;top:669px;width:21px;height:22px;border-radius:2px;background:#f75444"><svg class="abs" style="left:5px;top:5px" width="11" height="11" viewBox="0 0 12 12"><path d="M3.6 0.2H8.4L9.2 1.9H11.4Q12 1.9 12 2.5V3.6H0V2.5Q0 1.9 0.6 1.9H2.8Z" fill="#fff"/><path d="M1.2 3.6H10.8L10.4 11.2Q10.3 12 9.5 12H2.5Q1.7 12 1.6 11.2Z" fill="#fff"/><rect x="2.9" y="4.9" width="6.2" height="5.8" fill="#f75444" opacity="0.25"/><rect x="4.3" y="0.9" width="3.4" height="1" fill="#f75444" opacity="0.5"/></svg></div>
<div class="abs" style="left:276px;top:719px;width:12px;height:12px;border:1px solid #a9a9a9;border-radius:2px;background:linear-gradient(#f0f0f0,#dddddd 40%,#dcdcdc)"></div>
<div class="cell" style="left:306px;top:704px;width:72px">4</div>
<div class="cell" style="left:379px;top:704px;width:158px">刀客源码网</div>
<div class="cell" style="left:538px;top:704px;width:180px">刀客源码系统</div>
<div class="cell" style="left:719px;top:704px;width:98px">测试</div>
<div class="cell" style="left:818px;top:704px;width:274px">DK8BRGE2AG4A43F</div>
<div class="cell" style="left:1093px;top:704px;width:105px">60.00</div>
<div class="cell" style="left:1199px;top:704px;width:105px">50.00</div>
<div class="abs" style="left:1421px;top:721px;width:12px;height:12px;border-radius:50%;background:#18bc9c"></div>
<div class="abs" style="left:1437px;top:704px;height:47px;line-height:47px;color:#18bc9c;white-space:nowrap">正常</div>
<div class="cell dt" style="left:1504px;top:704px;width:261px">2022-08-13 22:52:55</div>
<div class="abs" style="left:1804px;top:716px;width:22px;height:22px;border-radius:2px;background:#18bc9c"><svg class="abs" style="left:5px;top:5px" width="12" height="12" viewBox="0 0 12 12"><path d="M0.5 11.5L1.3 7.9L9.1 0.1Q9.6 -0.3 10.1 0.1L11.9 1.9Q12.3 2.4 11.9 2.9L4.1 10.7Z" fill="#fff"/></svg></div>
<div class="abs" style="left:1830px;top:716px;width:21px;height:22px;border-radius:2px;background:#f75444"><svg class="abs" style="left:5px;top:5px" width="11" height="11" viewBox="0 0 12 12"><path d="M3.6 0.2H8.4L9.2 1.9H11.4Q12 1.9 12 2.5V3.6H0V2.5Q0 1.9 0.6 1.9H2.8Z" fill="#fff"/><path d="M1.2 3.6H10.8L10.4 11.2Q10.3 12 9.5 12H2.5Q1.7 12 1.6 11.2Z" fill="#fff"/><rect x="2.9" y="4.9" width="6.2" height="5.8" fill="#f75444" opacity="0.25"/><rect x="4.3" y="0.9" width="3.4" height="1" fill="#f75444" opacity="0.5"/></svg></div>
<div class="abs" style="left:276px;top:766px;width:12px;height:12px;border:1px solid #a9a9a9;border-radius:2px;background:linear-gradient(#f0f0f0,#dddddd 40%,#dcdcdc)"></div>
<div class="cell" style="left:306px;top:751px;width:72px">3</div>
<div class="cell" style="left:379px;top:751px;width:158px">刀客源码网</div>
<div class="cell" style="left:538px;top:751px;width:180px">刀客源码系统</div>
<div class="cell" style="left:719px;top:751px;width:98px">测试</div>
<div class="cell" style="left:818px;top:751px;width:274px">DKSCAYSKD1X8TVK</div>
<div class="cell" style="left:1093px;top:751px;width:105px">60.00</div>
<div class="cell" style="left:1199px;top:751px;width:105px">50.00</div>
<div class="abs" style="left:1421px;top:768px;width:12px;height:12px;border-radius:50%;background:#18bc9c"></div>
<div class="abs" style="left:1437px;top:751px;height:47px;line-height:47px;color:#18bc9c;white-space:nowrap">正常</div>
<div class="cell dt" style="left:1504px;top:751px;width:261px">2022-08-13 22:52:55</div>
<div class="abs" style="left:1804px;top:763px;width:22px;height:22px;border-radius:2px;background:#18bc9c"><svg class="abs" style="left:5px;top:5px" width="12" height="12" viewBox="0 0 12 12"><path d="M0.5 11.5L1.3 7.9L9.1 0.1Q9.6 -0.3 10.1 0.1L11.9 1.9Q12.3 2.4 11.9 2.9L4.1 10.7Z" fill="#fff"/></svg></div>
<div class="abs" style="left:1830px;top:763px;width:21px;height:22px;border-radius:2px;background:#f75444"><svg class="abs" style="left:5px;top:5px" width="11" height="11" viewBox="0 0 12 12"><path d="M3.6 0.2H8.4L9.2 1.9H11.4Q12 1.9 12 2.5V3.6H0V2.5Q0 1.9 0.6 1.9H2.8Z" fill="#fff"/><path d="M1.2 3.6H10.8L10.4 11.2Q10.3 12 9.5 12H2.5Q1.7 12 1.6 11.2Z" fill="#fff"/><rect x="2.9" y="4.9" width="6.2" height="5.8" fill="#f75444" opacity="0.25"/><rect x="4.3" y="0.9" width="3.4" height="1" fill="#f75444" opacity="0.5"/></svg></div>
<div class="abs" style="left:260px;top:815px;height:20px;line-height:20px;color:#333;white-space:nowrap;word-spacing:0.5px">显示第 1 到第 10 条记录，总共 12 条记录 每页显示</div>
<div class="abs" style="left:585px;top:810px;width:52px;height:32px;border:1px solid #ddd;border-radius:3px;background:#f4f4f4;color:#333;line-height:30px;padding-left:12px;font-size:13px">10</div>
<svg class="abs" style="left:616px;top:824px" width="8" height="4" viewBox="0 0 8 4"><path d="M0 4h8L4 0Z" fill="#333"/></svg>
<div class="abs" style="left:641px;top:815px;height:20px;line-height:20px;color:#333;white-space:nowrap">条记录</div>
<div class="pg" style="left:1577px;width:68px;border-radius:3px 0 0 3px">上一页</div>
<div class="pg" style="left:1644px;width:34px;background:#444c69;border-color:#444c69;color:#fff;font-weight:bold">1</div>
<div class="pg" style="left:1677px;width:34px">2</div>
<div class="pg" style="left:1710px;width:68px;border-radius:0 3px 3px 0">下一页</div>
<div class="abs" style="left:1783px;top:808px;width:50px;height:33px;border:1px solid #d2d6de;background:#fff"></div>
<div class="abs" style="left:1838px;top:809px;width:52px;height:32px;border:1px solid #ddd;border-radius:3px;background:#f4f4f4;color:#333;line-height:30px;text-align:center;font-size:13px">跳转</div>

<div class="abs" style="left:1920px;top:2px;width:2px;height:1092px;background:#c8c8c8"></div>
<div class="abs" style="left:1921px;top:0;width:1px;height:104px;background:#fff"></div>
<div class="abs" style="left:1921px;top:104px;width:1px;height:19px;background:#8a8a8a"></div>


</body></html>
